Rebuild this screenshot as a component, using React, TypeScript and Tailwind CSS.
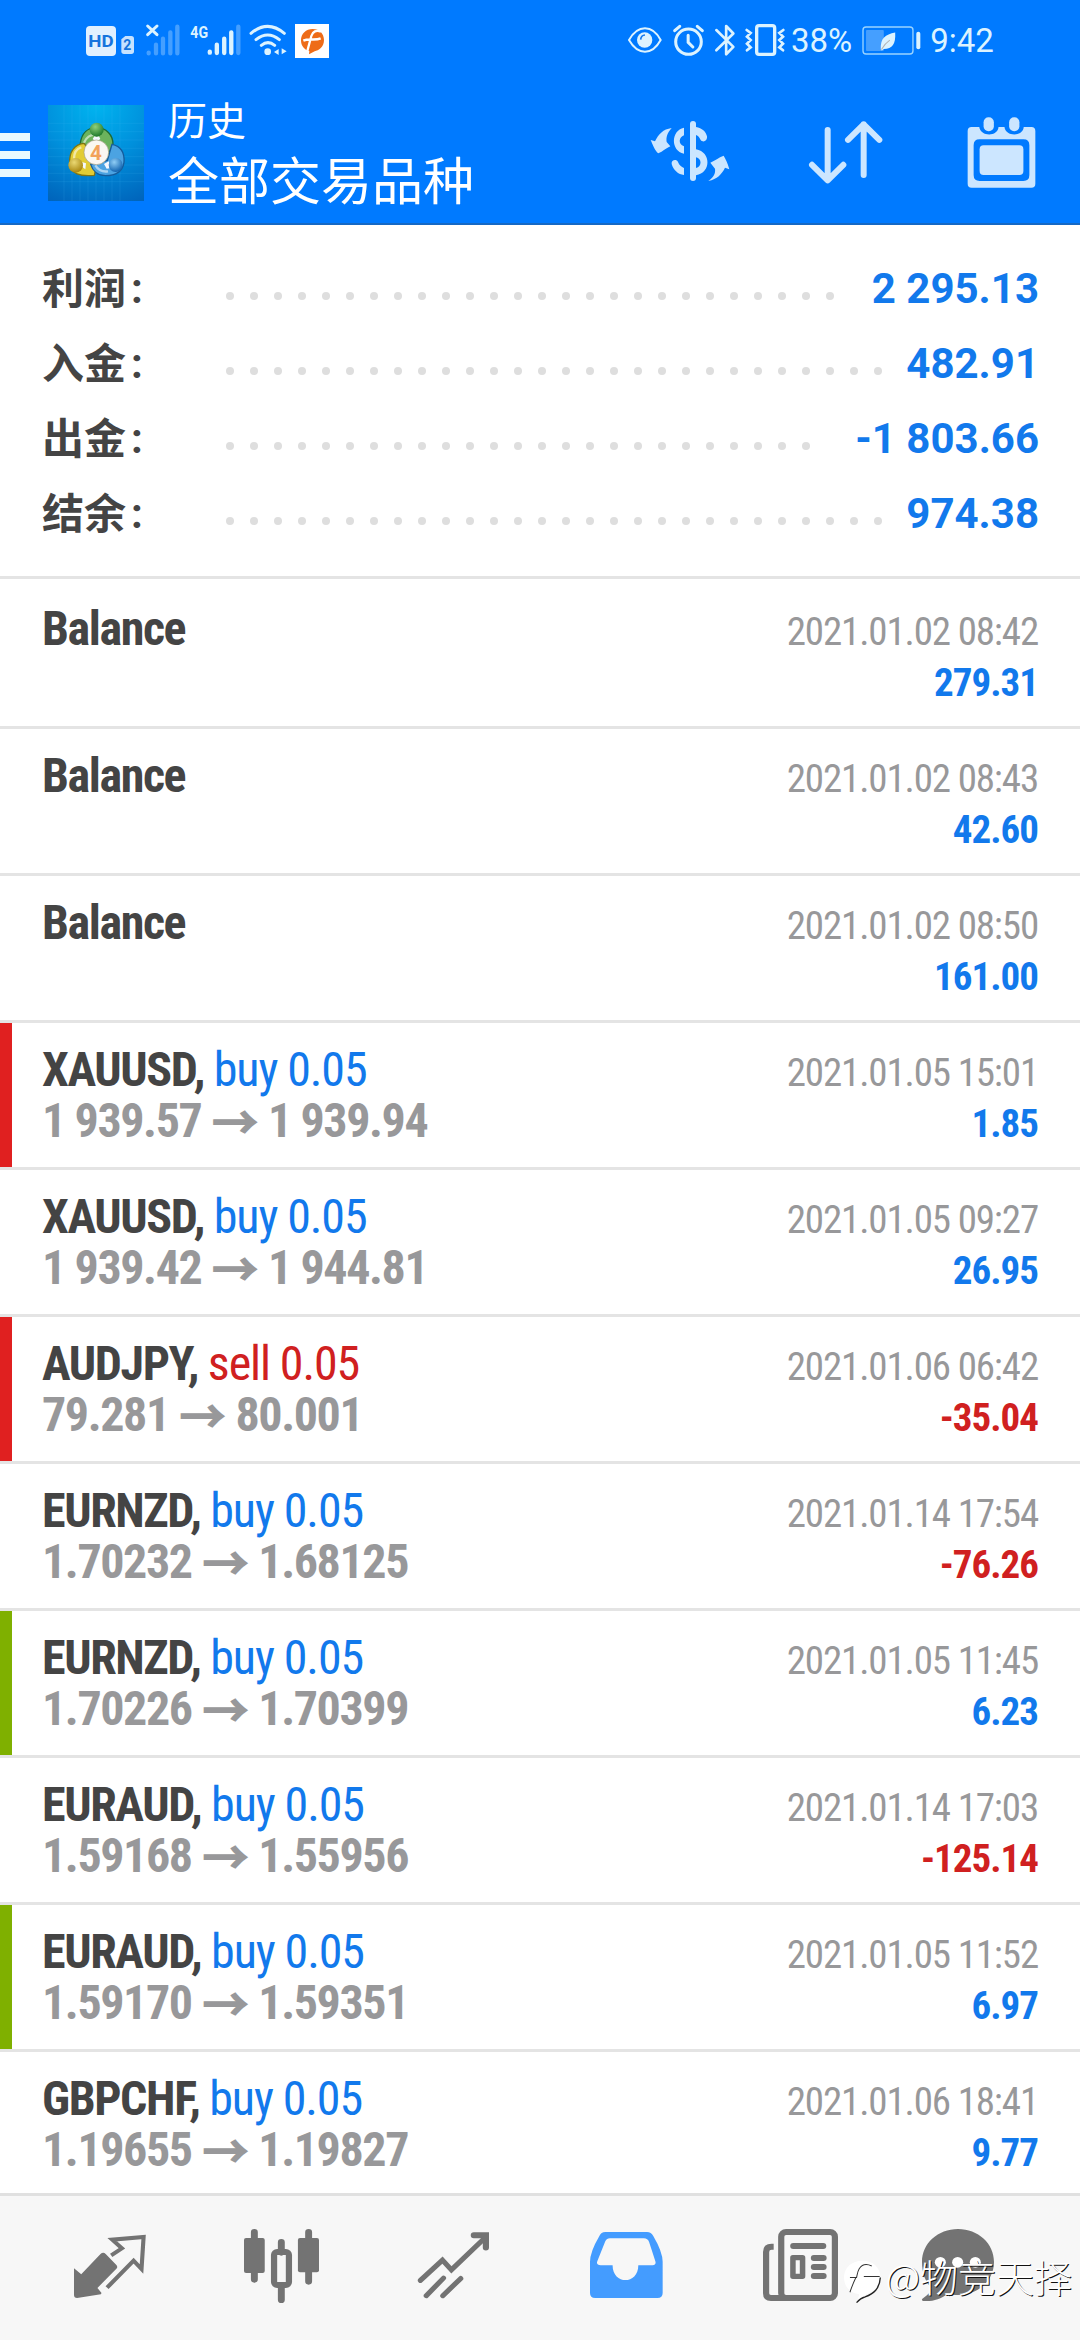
import React from "react";

interface IconProps {
  box: string;
  className: string;
  children: React.ReactNode;
}

interface Total {
  label: string;
  value: string;
  dots: number;
}

interface Deal {
  symbol: string;
  type?: "buy" | "sell";
  volume?: string;
  open?: string;
  close?: string;
  time: string;
  profit: string;
  mark?: "red" | "green";
}

const totals: Total[] = [
  { label: "利润", value: "2 295.13", dots: 26 },
  { label: "入金", value: "482.91", dots: 28 },
  { label: "出金", value: "-1 803.66", dots: 25 },
  { label: "结余", value: "974.38", dots: 28 },
];

const deals: Deal[] = [
  { symbol: "Balance", time: "2021.01.02 08:42", profit: "279.31" },
  { symbol: "Balance", time: "2021.01.02 08:43", profit: "42.60" },
  { symbol: "Balance", time: "2021.01.02 08:50", profit: "161.00" },
  { symbol: "XAUUSD", type: "buy", volume: "0.05", open: "1 939.57", close: "1 939.94", time: "2021.01.05 15:01", profit: "1.85", mark: "red" },
  { symbol: "XAUUSD", type: "buy", volume: "0.05", open: "1 939.42", close: "1 944.81", time: "2021.01.05 09:27", profit: "26.95" },
  { symbol: "AUDJPY", type: "sell", volume: "0.05", open: "79.281", close: "80.001", time: "2021.01.06 06:42", profit: "-35.04", mark: "red" },
  { symbol: "EURNZD", type: "buy", volume: "0.05", open: "1.70232", close: "1.68125", time: "2021.01.14 17:54", profit: "-76.26" },
  { symbol: "EURNZD", type: "buy", volume: "0.05", open: "1.70226", close: "1.70399", time: "2021.01.05 11:45", profit: "6.23", mark: "green" },
  { symbol: "EURAUD", type: "buy", volume: "0.05", open: "1.59168", close: "1.55956", time: "2021.01.14 17:03", profit: "-125.14" },
  { symbol: "EURAUD", type: "buy", volume: "0.05", open: "1.59170", close: "1.59351", time: "2021.01.05 11:52", profit: "6.97", mark: "green" },
  { symbol: "GBPCHF", type: "buy", volume: "0.05", open: "1.19655", close: "1.19827", time: "2021.01.06 18:41", profit: "9.77" },
];

const Icon = ({ box, className, children }: IconProps) => (
  <svg viewBox={box} preserveAspectRatio="none" className={`shrink-0 overflow-visible ${className}`} fill="none">
    {children}
  </svg>
);

const StatusBar = () => (
  <div className="flex h-20 items-start pt-6 pl-[86px] text-[#dcf3ff]">
    <Icon box="78 72 144 102" className="h-[34px] w-12">
      <rect x="78" y="78" width="90" height="90" rx="12" fill="#e0f0ff" />
      <text x="85" y="142" fontSize="52" fontWeight="700" fontFamily="Roboto" fill="#1674dd" textLength="76" lengthAdjust="spacingAndGlyphs">
        HD
      </text>
      <path d="M184 118l12-10h18q8 0 8 8v38q0 8-8 8h-22q-8 0-8-8z" fill="#c6e2ff" />
      <text x="190" y="151" fontSize="42" fontWeight="700" fontFamily="Roboto" fill="#1674dd">
        2
      </text>
    </Icon>
    <Icon box="258 72 102 96" className="ml-3 h-8 w-[34px]">
      <path d="M263 78l28 26M291 78l-28 26" stroke="#dcf3ff" strokeWidth="9" strokeLinecap="round" />
      <path d="M266 158v2M288 134v26M309 116v44M331 97v63M352 80v80" stroke="#459fff" strokeWidth="13" strokeLinecap="round" />
    </Icon>
    <Icon box="390 72 152 96" className="ml-[10px] h-8 w-[51px]">
      <text x="391" y="113" fontSize="52" fontWeight="700" fontFamily="Roboto" fill="#dcf3ff" textLength="53" lengthAdjust="spacingAndGlyphs">
        4G
      </text>
      <path d="M449 155v3M470 134v25M492 116v43M513 97v62" stroke="#dcf3ff" strokeWidth="13" strokeLinecap="round" />
      <path d="M534 80v79" stroke="#459fff" strokeWidth="13" strokeLinecap="round" />
    </Icon>
    <Icon box="567 72 114 96" className="ml-2 h-8 w-[38px]">
      <path d="M573 100q50-42 100 0M588 119q35-28 70 0M604 136q20-16 40 0" stroke="#dcf3ff" strokeWidth="9" strokeLinecap="round" />
      <circle cx="623" cy="155" r="10" fill="#dcf3ff" />
      <path d="M642 156l14-9v18zM680 154l-15 9v-18z" fill="#dcf3ff" />
    </Icon>
    <Icon box="702 72 102 102" className="ml-[8px] h-[34px] w-[34px]">
      <path d="M702 72h102v102H702z" fill="#fff" />
      <path d="M755 87c20 0 34 14 34 33 0 22-16 31-28 34l-17 9 1-10c-15-3-25-15-25-32 0-20 15-34 35-34z" fill="#ee6c18" />
      <path d="M780 95c-14-6-25-1-29 13l-12 45M727 122c16-8 35 1 52-7" stroke="#fff" strokeWidth="7" />
    </Icon>
    <Icon box="80 72 102 96" className="ml-[299px] h-8 w-[34px]">
      <path d="M83 120q20-35 48-35t47 35q-19 35-47 35t-48-35z" stroke="#dcf3ff" strokeWidth="6" />
      <circle cx="130" cy="120" r="23" fill="#dcf3ff" />
      <path d="M118 119q1-13 13-14" stroke="#1479ee" strokeWidth="5" />
    </Icon>
    <Icon box="215 72 92 96" className="ml-[11px] h-8 w-[31px]">
      <circle cx="261" cy="125" r="38" stroke="#dcf3ff" strokeWidth="9" />
      <path d="M220 92l15-13M302 92l-15-13" stroke="#dcf3ff" strokeWidth="9" strokeLinecap="round" />
      <path d="M260 106v21l14 14" stroke="#dcf3ff" strokeWidth="9" strokeLinecap="round" />
    </Icon>
    <Icon box="340 72 64 98" className="ml-[11px] h-[33px] w-[21px]">
      <path d="M344 90l52 50-22 22V78l22 22-52 50" stroke="#dcf3ff" strokeWidth="8" strokeLinecap="round" strokeLinejoin="round" />
    </Icon>
    <Icon box="432 72 120 96" className="ml-[9px] h-8 w-10">
      <rect x="467" y="77" width="54" height="86" rx="7" stroke="#dcf3ff" strokeWidth="10" />
      <path d="M437 90l12 9-11 11 11 10-11 11 11 11-11 9M547 90l-12 9 11 11-11 10 11 11-11 11 11 9" stroke="#dcf3ff" strokeWidth="8" strokeLinecap="round" />
    </Icon>
    <span className="ml-[6px] pt-px font-[Roboto] text-[33px] leading-8">38%</span>
    <Icon box="785 78 176 86" className="mt-0.5 ml-[10px] h-[29px] w-[59px]">
      <rect x="788" y="81" width="149" height="80" rx="9" stroke="#9ad4ff" strokeWidth="4" />
      <rect x="797" y="90" width="53" height="62" rx="3" fill="#459fff" />
      <path d="M884 97c2 35-8 48-34 49l-6 5-3-4c-1-34 13-44 43-50z" fill="#dcf3ff" />
      <path d="M843 148q10-18 25-28" stroke="#b4b4b4" strokeWidth="3" />
      <path d="M953 101v40" stroke="#dcf3ff" strokeWidth="12" strokeLinecap="round" />
    </Icon>
    <span className="ml-[9px] pt-px font-[Roboto] text-[33px] leading-8">9:42</span>
  </div>
);

const AppLogo = () => (
  <Icon box="144 45 288 288" className="h-24 w-24">
    <defs>
      <radialGradient id="logoBg" cx="0.5" cy="0" r="1.1">
        <stop offset="0" stopColor="#00b4f0" />
        <stop offset="0.5" stopColor="#0090dc" />
        <stop offset="1" stopColor="#0064bb" />
      </radialGradient>
      <radialGradient id="green" cx="0.4" cy="0.3" r="0.7">
        <stop offset="0" stopColor="#8fd07a" />
        <stop offset="1" stopColor="#1f7a2c" />
      </radialGradient>
      <radialGradient id="gold" cx="0.4" cy="0.3" r="0.7">
        <stop offset="0" stopColor="#ead873" />
        <stop offset="1" stopColor="#a8860f" />
      </radialGradient>
      <radialGradient id="blue" cx="0.4" cy="0.3" r="0.7">
        <stop offset="0" stopColor="#8fcdf5" />
        <stop offset="1" stopColor="#1264b0" />
      </radialGradient>
    </defs>
    <path d="M144 45h288v288H144z" fill="url(#logoBg)" />
    <path d="M192 45v288M216 45v288M240 45v288M264 45v288M288 45v288M312 45v288M336 45v288M360 45v288M144 100h288M144 125h288M144 150h288M144 175h288M144 200h288M144 225h288M144 250h288M144 275h288" stroke="#4fc0f5" strokeOpacity="0.2" strokeWidth="2" />
    <path d="M241 160c4-30 22-47 48-47 30 0 50 22 50 50l-14 32-74-4z" fill="#6cb35c" stroke="#1d6a34" strokeWidth="4" />
    <path d="M209 220c-2-34 14-58 44-60l38 62-8 34c-42 4-72-4-74-36z" fill="#e2cc34" stroke="#7d7414" strokeWidth="4" />
    <path d="M336 163c28 6 38 28 36 54-4 26-24 40-56 40-22 0-38-14-44-34l50-12z" fill="#4ba3e2" stroke="#155c9c" strokeWidth="4" />
    <path d="M252 158c8-18 20-24 34-24M222 206c0-18 8-30 22-34M286 226c10 16 24 20 38 18" stroke="#fff" strokeOpacity="0.55" strokeWidth="7" />
    <path d="M278 147l11 8 12-8-4-8h-14zM246 216l12 4-2 18-10-8zM312 222l14-8 8 20-14 2z" fill="#f4f8ff" />
    <circle cx="290" cy="119" r="21" fill="url(#green)" />
    <circle cx="227" cy="226" r="22" fill="url(#gold)" />
    <circle cx="347" cy="225" r="21" fill="url(#blue)" />
    <circle cx="289" cy="187" r="37" fill="#faf7f2" stroke="#a09c80" strokeWidth="2" />
    <text x="270" y="209" fontSize="62" fontWeight="700" fontFamily="Roboto" fill="#f2a25c">
      4
    </text>
  </Icon>
);

const Header = () => (
  <header className="h-[225px] shrink-0 border-b-2 border-[#1669c4] bg-[#007aff]">
    <StatusBar />
    <div className="flex items-start text-white">
      <div className="mt-[53px] flex w-[30px] flex-col gap-[10px]">
        <span className="h-2 bg-[#e8f9ff]" />
        <span className="h-2 bg-[#e8f9ff]" />
        <span className="h-2 bg-[#e8f9ff]" />
      </div>
      <div className="mt-[25px] ml-[18px]">
        <AppLogo />
      </div>
      <div className="mt-[14px] ml-6 w-[483px] font-['Noto_Sans_CJK_SC',sans-serif]">
        <p className="text-[39px] leading-[48px]">历史</p>
        <p className="mt-1 text-[51px] leading-[64px]">全部交易品种</p>
      </div>
      <Icon box="93 93 234 180" className="mt-[41px] h-[60px] w-[78px]">
        <path d="M155 114c-14 16-17 28-15 42l11 13c-14 6-22 16-36 21-9-7-14-18-23-40l13 4c11-22 24-36 50-40z" fill="#cce6ff" />
        <path d="M265 273c17-12 22-24 20-37l-14-18c14-6 25-16 40-21 6 10 12 22 17 41l-13-5c-10 20-23 34-50 40z" fill="#cce6ff" />
        <path d="M192 113v23c-16 5-18 28 0 33v22c-40-8-40-70 0-78zM192 255v-21c-8-3-14-8-18-18-5-11-21-6-19 6 5 19 20 31 37 33z" fill="#cce6ff" />
        <path d="M228 111c18 3 30 14 33 28 2 14-12 20-19 11-4-8-7-12-14-15zM228 178c46 8 46 71 0 78v-22c18-3 18-29 0-32z" fill="#cce6ff" />
        <path d="M219 102v162" stroke="#cce6ff" strokeWidth="18" strokeLinecap="round" />
      </Icon>
      <Icon box="568 93 222 190" className="mt-[41px] ml-20 h-[63px] w-[74px]">
        <path d="M624 120v151M577 225l47 47 47-47M732 256V103M685 150l47-47 47 47" stroke="#cce6ff" strokeWidth="18" strokeLinecap="round" strokeLinejoin="round" />
      </Icon>
      <Icon box="1042 80 208 214" className="mt-[37px] ml-[84px] h-[71px] w-[69px]">
        <path
          fillRule="evenodd"
          d="M1056 110h23c4 30 56 30 58 0h18c3 30 56 30 58 0h23q12 0 12 12v159q0 12-12 12h-180q-12 0-12-12V122q0-12 12-12zM1080 147q-18 0-18 18v90q0 18 18 18h132q18 0 18-18v-90q0-18-18-18z"
          fill="#cce6ff"
        />
        <rect x="1080" y="165" width="132" height="90" rx="12" fill="#cce6ff" />
        <rect x="1092" y="81" width="31" height="42" rx="15" fill="#cce6ff" />
        <rect x="1169" y="81" width="31" height="42" rx="15" fill="#cce6ff" />
      </Icon>
    </div>
  </header>
);

const TotalRow = ({ label, value, dots }: Total) => (
  <div className="flex h-[75px] items-start pr-[41px] pl-[42px] text-[42px] leading-[75px] font-bold">
    <span className="-mt-[3px] w-[89px] font-['Noto_Sans_CJK_SC',sans-serif] text-[#444]">{label}</span>
    <span className="w-[95px] text-[#444]">:</span>
    <span className="mt-[41px] flex gap-4">
      {Array.from({ length: dots }, (_, i) => (
        <span key={i} className="h-2 w-2 rounded-full bg-[#dedede]" />
      ))}
    </span>
    <span className="ml-auto text-[#1279ec]">{value}</span>
  </div>
);

const DealRow = ({ symbol, type, volume, open, close, time, profit, mark }: Deal) => (
  <div className="flex h-[147px] shrink-0 border-b-3 border-[#e4e4e4] pr-[42px] font-stretch-condensed">
    <div className={`w-3 ${mark === "red" ? "bg-[#e02020]" : mark === "green" ? "bg-[#7fb000]" : ""}`} />
    <div className="flex-1 pt-[21px] pl-[30px] text-[48px] leading-[51px] font-bold tracking-[-1.4px] whitespace-pre">
      <p className="text-[#444]">
        {symbol}
        {type && (
          <>
            {", "}
            <span className={`font-normal tracking-[-1.1px] ${type === "buy" ? "text-[#1279ec]" : "text-[#d02020]"}`}>
              {type} {volume}
            </span>
          </>
        )}
      </p>
      {open && (
        <p className="flex items-start gap-[10px] text-[#98989a]">
          <span>{open}</span>
          <span className="-mt-px font-['Noto_Sans_CJK_SC',sans-serif] font-black">→</span>
          <span>{close}</span>
        </p>
      )}
    </div>
    <div className="pt-[25px] text-right text-[39px] leading-[51px]">
      <p className="tracking-[-1.15px] text-[#98989a]">{time}</p>
      <p className={`font-bold tracking-[-1px] ${profit.startsWith("-") ? "text-[#d02020]" : "text-[#1279ec]"}`}>{profit}</p>
    </div>
  </div>
);

const BottomNav = () => (
  <nav className="relative flex h-[147px] shrink-0 items-start border-t-3 border-[#e0e0e0] bg-[#f7f7f7] pl-[74px]">
    <Icon box="215 165 209 189" className="mt-[39px] h-[63px] w-[72px]">
      <path d="M215 265l21 18 56-61q8-7 15 0l31 33q5 6 0 11l-55 58 12 15-2 4-69 11q-9 0-9-9z" fill="#737373" />
      <path d="M323 226l31-21-28-26 91-8-6 96-23-25-77 81" stroke="#737373" strokeWidth="12" />
    </Icon>
    <Icon box="709 147 217 222" className="mt-[33px] ml-[98px] h-[74px] w-[75px]">
      <path d="M739 157v141M896 157v147M817 187v30M817 320v39" stroke="#737373" strokeWidth="20" strokeLinecap="round" />
      <rect x="709" y="174" width="60" height="105" rx="6" fill="#737373" />
      <rect x="865" y="174" width="61" height="103" rx="6" fill="#737373" />
      <rect x="796" y="216" width="43" height="99" rx="9" stroke="#737373" strokeWidth="18" />
    </Icon>
    <Icon box="1214 155 206 199" className="mt-9 ml-[99px] h-[66px] w-[71px]">
      <path d="M1221 301l64-61 26 29 99-98M1238 347l50-53M1286 347l52-52" stroke="#737373" strokeWidth="15" strokeLinecap="round" />
      <path d="M1376 165h35v37" stroke="#737373" strokeWidth="18" strokeLinecap="round" />
    </Icon>
    <Icon box="147 155 210 199" className="mt-9 ml-[101px] h-[66px] w-[73px]">
      <path
        fillRule="evenodd"
        d="M191 155h120q12 0 18 12 27 48 27 78v94q0 15-15 15H162q-15 0-15-15v-94q0-30 27-78 5-12 17-12zM204 174q-9 0-13 9l-23 60q-4 12 10 12h34c0 60 74 60 74 0h41q11 0 8-12l-18-58q-4-11-15-11z"
        fill="#449cff"
      />
    </Icon>
    <Icon box="646 147 218 216" className="mt-[33px] ml-[100px] h-[72px] w-[75px]">
      <rect x="699" y="156" width="156" height="198" rx="14" stroke="#737373" strokeWidth="18" />
      <path d="M677 200h-6q-16 0-16 16v124q0 14 14 14h172" stroke="#737373" strokeWidth="18" />
      <path d="M734 198h87M794 234h28M794 261h28M794 288h28" stroke="#737373" strokeWidth="18" strokeLinecap="round" />
      <rect x="733" y="233" width="28" height="56" stroke="#737373" strokeWidth="16" strokeLinejoin="round" />
    </Icon>
    <Icon box="1110 147 208 216" className="mt-[33px] ml-[84px] h-[72px] w-[72px]">
      <path d="M1214 147c58 0 104 43 104 99s-46 99-104 99c-11 0-21-2-30-4-20 16-42 24-70 22-5-1-6-5-1-8 14-10 22-19 24-31-17-18-27-44-27-78 0-56 46-99 104-99z" fill="#737373" />
      <circle cx="1163" cy="247" r="16" fill="#fff" />
      <circle cx="1213" cy="247" r="16" fill="#fff" />
      <circle cx="1264" cy="247" r="16" fill="#fff" />
    </Icon>
    {/* author mark over the corner of the bar */}
    <div className="absolute top-[55px] right-[8px] flex items-start text-white">
      <Icon box="8 120 112 128" className="mt-[9px] h-[43px] w-[37px]">
        <path d="M64 122c32 0 54 20 54 48 0 30-22 44-42 52l-28 24 6-24c-28-4-46-22-46-50 0-30 24-50 56-50z" fill="#fff" />
        <path d="M92 138c-16-8-30-4-38 8-6 10-6 20-8 26H26M44 172c-6 12-12 26-18 44M68 169h48" stroke="#333" strokeWidth="3" />
        <path d="M118 172c-2 34-20 48-46 58-12 3-18 8-26 17" stroke="#222" strokeWidth="4" />
      </Icon>
      <span className="ml-1 font-['Noto_Sans_CJK_SC',sans-serif] text-[38px] leading-[50px] font-light text-shadow-[1px_1px_0px_#111]">
        @物竞天择
      </span>
    </div>
  </nav>
);

const App = () => {
  return (
    <div className="flex h-[2340px] w-[1080px] flex-col overflow-hidden bg-white font-[Roboto,sans-serif]">
      <Header />
      <section className="shrink-0 border-b-3 border-[#e4e4e4] pt-[26px] pb-[25px]">
        {totals.map((total) => (
          <TotalRow key={total.label} {...total} />
        ))}
      </section>
      <main className="flex min-h-0 flex-1 flex-col overflow-hidden pt-[3px]">
        {deals.map((deal, i) => (
          <DealRow key={i} {...deal} />
        ))}
      </main>
      <BottomNav />
    </div>
  );
};

export default App;
